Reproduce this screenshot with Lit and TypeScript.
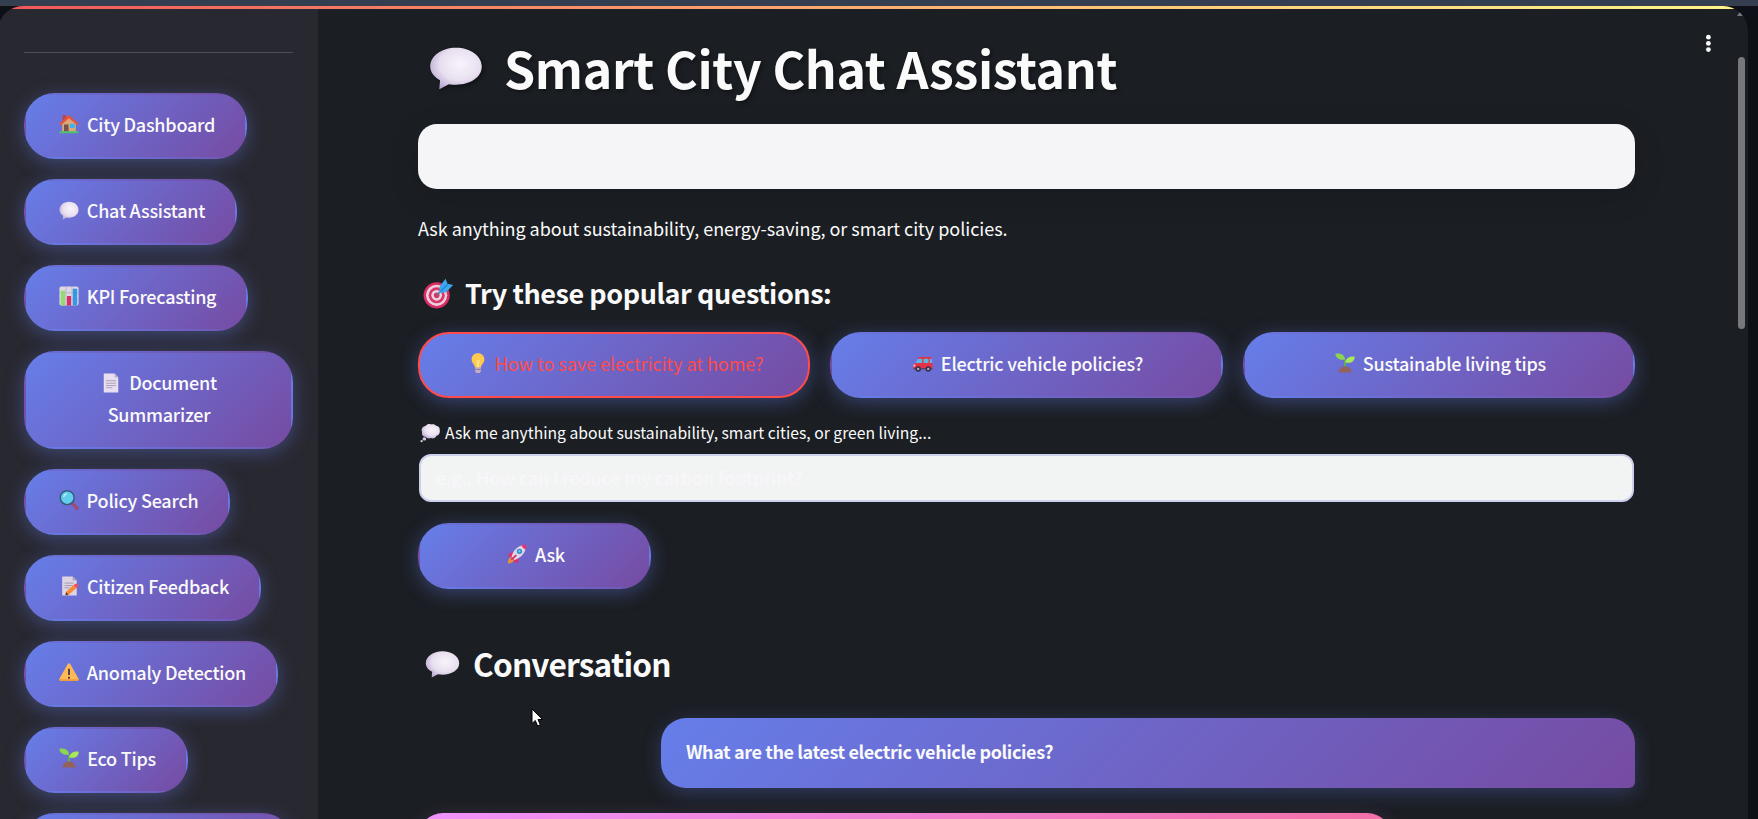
import { LitElement, html, css, svg } from 'lit';
import { customElement, property } from 'lit/decorators.js';

const icons: Record<string, unknown> = {
  house: svg`<path d="M4 1.500h4v7H4z" fill="#c0463c"/><path d="M3.500 10.500 11 4l7.500 6.500V19.500h-15z" fill="#dca678"/><path d="M.3 10.800 10.900 1.200 21.700 10.800l-1.500 1.700L11 4.600 1.900 12.500z" fill="#e8533a"/><path d="M5.500 11.500h5v8h-5z" fill="#77534b"/><path d="M12.300 10.800h5v4.600h-5z" fill="#35b6ee"/><path d="M.5 19h21v2.200H.5z" fill="#4bc56a"/>`,
  bubble: svg`<path d="M11 1.800c5.900 0 10.500 3.900 10.500 9s-4.600 8.700-10.500 8.700c-1 0-2-.1-2.900-.3L4.200 21.700l.3-4.400C2.100 15.900.5 13.500.5 10.800c0-5.100 4.600-9 10.500-9z" fill="url(#cloud)"/>`,
  chart: svg`<rect x=".5" y=".5" width="21" height="21" rx="2" fill="#ded8e4"/><path d="M1 7.500h20M1 14.500h20M7.700 1v20M14.300 1v20" stroke="#b4acbd" stroke-width=".8"/><path d="M2 5.200h4.700v16.300H2z" fill="#91dc6d"/><path d="M8.700 11h4.600v10.500H8.700z" fill="#d92d6a"/><path d="M15.200 3h4.800v18.500h-4.800z" fill="#329ae5"/>`,
  doc: svg`<path d="M3 .5h12l4 4.500v16.500H3z" fill="#e8def1"/><path d="M15 .5V5h4z" fill="#bcb1cb"/><path d="M5.500 8.500h11M5.500 11.200h11M5.500 13.800h11M5.500 16.200h7" stroke="#a69caf" stroke-width="1"/>`,
  search: svg`<path d="m15 15 4.800 5" stroke="#9b4c79" stroke-width="3.800" stroke-linecap="round"/><circle cx="9" cy="8.500" r="7.600" fill="#63cdee" stroke="#385b7c" stroke-width="1.600"/><path d="M5 7.500c.4-1.900 1.700-3 3.500-3.400" stroke="#b4effc" stroke-width="1.500" fill="none"/>`,
  memo: svg`<path d="M3.500.5h11.500l4.500 4.500v16.500h-16z" fill="#ded5e4"/><path d="M15 .5V5h4.500z" fill="#ada3b8"/><path d="M6 7.800h10M6 10.500h9M6 13h6" stroke="#9f96aa" stroke-width="1"/><path d="m7 21 .8-3.800 8-7 3.200 3.300-8 6.900z" fill="#fa8a33"/><path d="m15.800 10.200 1.800-1.300c1.700-1 4.600 1.200 3.400 2.900L19 13.500z" fill="#f34f62"/><path d="m7 21.300.8-3.600 2.900 3.100z" fill="#5a4045"/>`,
  warning: svg`<path d="M11 1.500c.6 0 1 .3 1.300.8l9.200 16.200c.6 1-.1 2-1.200 2H1.700c-1.100 0-1.800-1-1.200-2L9.700 2.300c.3-.5.7-.8 1.300-.8z" fill="#ffba55"/><path d="M.4 19h21.200c0 1.100-.5 1.800-1.300 1.800H1.700c-.8 0-1.300-.7-1.300-1.800z" fill="#f19d3f"/><path d="M11 7.500v6.700M11 16.300v2" stroke="#4c3549" stroke-width="2"/>`,
  seedling: svg`<path d="M11.100 16V8" stroke="#59b647" stroke-width="2"/><path d="M.4.700c4.500-.8 10.200.1 10.700 6.800C5.800 7.800.9 6.300.4.700z" fill="#8bd64d"/><path d="M21.700 4c-.1 4.900-4.400 8.100-10.600 6.200 1-4.800 5.500-6.900 10.600-6.200z" fill="#a9e957"/><path d="M4 21.500c0-4 3-6.700 7-6.700s7 2.700 7 6.700z" fill="#94615b"/>`,
  target: svg`<circle cx="9.700" cy="12.300" r="9.300" fill="#d92d64"/><circle cx="9.700" cy="12.300" r="7.500" fill="#eccfdf"/><circle cx="9.700" cy="12.300" r="5.700" fill="#d83568"/><circle cx="9.700" cy="12.300" r="3.800" fill="#ecd5e2"/><circle cx="9.700" cy="12.300" r="2" fill="#d83568"/><path d="m9.700 12.300 6-6" stroke="#68758f" stroke-width="1.200"/><path d="m11.500 10.800.3-4.700L16 .5l1.400 3.600 4 .8-5 5.300z" fill="#3ba7ed"/><path d="m12.500 9.500 5-5" stroke="#1f7fc8" stroke-width=".8"/>`,
  bulb: svg`<path d="M11 .3c4.200 0 7 3 7 6.800 0 4.300-3.500 5-3.700 9.200H7.700C7.500 12.100 4 11.400 4 7.100 4 3.300 6.800.3 11 .3z" fill="#ffc94d"/><path d="M8.500 7c1 1.500 4 1.500 5 0-1 2-1.300 4-1.300 9H9.800c0-5-.3-7-1.300-9z" fill="#ffe589"/><path d="M7.700 16h6.600v3.800L13 22H9l-1.300-2.200z" fill="#c2adc1"/><path d="M7.700 18h6.600" stroke="#89758f"/>`,
  car: svg`<path d="m2.500 11 3.500-5.500h14l1.200 5.500z" fill="#62b5e2"/><path d="M6 4.500h14.200v1.700H5zM10 6h1.500v5H10zM17 6h1.500v5H17z" fill="#e33343"/><path d="M.5 12.500 4 11h17.500v6.500H.5z" fill="#e5314a"/><path d="M.5 16.500h21v1.500H.5z" fill="#66425e"/><circle cx="5.700" cy="17.500" r="3" fill="#362f4c"/><circle cx="16.800" cy="17.500" r="3" fill="#362f4c"/><circle cx="5.700" cy="17.500" r="1.300" fill="#b4aac3"/><circle cx="16.800" cy="17.500" r="1.300" fill="#b4aac3"/><path d="M.5 13.800h2" stroke="#ffd4b4" stroke-width="2"/>`,
  thought: svg`<path d="M6.500 2c1-2 4-2.600 5.700-1.400 2-1 4.800-.1 5.600 1.600 2.400.2 4.200 2.200 3.800 4.300 1 4.200-.9 7.700-3.500 8-1 3.200-4 3.800-6 2.700-2 1-5 .4-5.900-1.500-2.700.1-4.700-2.400-3.900-6.300C.5 5.800 3.500 2.300 6.500 2z" fill="url(#cloud)"/><circle cx="4.800" cy="18.200" r="2" fill="#d5c7e5"/><circle cx="1.800" cy="21" r="1.300" fill="#d5c7e5"/>`,
  rocket: svg`<path d="m7.500 9-4.300.8L.8 14.300l5-.5zM12.800 15l-.8 6.300-3.800-1.500-.4-3.800z" fill="#e62b66"/><path d="M5 14.500c-3 .3-4 3-4 6.800 3.500.2 6.800-1.500 6.600-4.800z" fill="#ee8c3a"/><path d="M5 14C7 6.500 12.500 1.500 19 1.100c2.200-.2 2.300.5 2 2.400C20.200 9.500 15.500 15 8.500 17.500z" fill="#dfd6e7"/><path d="M15.500 1.900c2.300-.9 4.800-1.200 5.600-.8.5.6.2 3.300-.7 5.600z" fill="#e4356b"/><circle cx="13.700" cy="8" r="2.900" fill="#278bcd"/><circle cx="13.700" cy="8" r="1.300" fill="#76c7ed"/><path d="m4.800 17.200 5.500-5" stroke="#d72d66" stroke-width="2"/>`,
};

@customElement('emoji-icon')
export class EmojiIcon extends LitElement {
  static styles = css`
    :host { display: inline-block; width: 20px; height: 20px; flex: none; }
    .art { display: block; width: 100%; height: 100%; overflow: visible; }
  `;
  @property() name = '';
  render() {
    return html`<svg class="art" viewBox="0 0 22 22" preserveAspectRatio="none">
      <defs><radialGradient id="cloud" cx=".58" cy=".4" r=".65"><stop offset="0" stop-color="#f8f4fc"/><stop offset=".6" stop-color="#e8dfef"/><stop offset="1" stop-color="#baa9d2"/></radialGradient></defs>
      ${icons[this.name]}</svg>`;
  }
}

const nav = [
  { icon: 'house', label: 'City Dashboard', w: 223 },
  { icon: 'bubble', label: 'Chat Assistant', w: 213 },
  { icon: 'chart', label: 'KPI Forecasting', w: 224 },
  { icon: 'doc', label: 'Document Summarizer', w: 269 },
  { icon: 'search', label: 'Policy Search', w: 206 },
  { icon: 'memo', label: 'Citizen Feedback', w: 237 },
  { icon: 'warning', label: 'Anomaly Detection', w: 254 },
  { icon: 'seedling', label: 'Eco Tips', w: 164 },
];
const questions = [
  { icon: 'bulb', label: 'How to save electricity at home?', active: true },
  { icon: 'car', label: 'Electric vehicle policies?', active: false },
  { icon: 'seedling', label: 'Sustainable living tips', active: false },
];

@customElement('app-root')
export class AppRoot extends LitElement {
  static styles = css`
    :host { display: block; position: relative; height: 819px; overflow: hidden; background: #0d1117; color: #fafafa;
      font: 500 18px/32px "Noto Sans CJK SC", "Noto Sans", sans-serif; }
    * { box-sizing: border-box; }
    .strip { height: 6px; background: linear-gradient(#343e51 0 5px, #3c3d48 5px); }
    .panel { display: flex; height: 813px; width: 1750px; margin-left: -2px; border-radius: 25px 25px 0 0; overflow: hidden; background: #1b1e23; position: relative; }
    .rainbow { position: absolute; top: 0; left: 0; right: 0; height: 3px; background: linear-gradient(90deg, #f0575a, #feca7a 66%, #fff58c); }
    .side { width: 320px; height: 813px; padding: 46px 25px 0 26px; background: #282830; flex: none; overflow: hidden; }
    .rule { height: 1px; background: #4d4d55; margin-bottom: 40px; }
    .menu { display: flex; flex-direction: column; align-items: flex-start; gap: 20px; }
    .btn { display: flex; align-items: center; justify-content: center; gap: 8px; height: 66px; border: 2px solid transparent; border-radius: 31px;
      padding: 0 0 4px 3px; margin: 0; color: #fafafa; font: inherit; letter-spacing: -.24px; white-space: nowrap; flex: none;
      background: linear-gradient(135deg, #667eea 0%, #764ba2 100%); box-shadow: 0 4px 19px rgba(102,126,234,.4); }
    .tall { height: 98px; white-space: normal; display: block; padding: 13px 30px 17px 31px; text-align: center; }
    .tall emoji-icon { vertical-align: -3px; margin-right: 8px; }
    .active { border-color: #ff4b4b; color: #ff4b4b; font-weight: 400; letter-spacing: -.05px; gap: 7px; }
    .main { flex: 1; padding: 0 113px 0 100px; height: 813px; overflow: hidden; }
    h1, h2, h3, p { margin: 0; }
    h1 { display: flex; align-items: center; gap: 21px; height: 118px; padding: 4px 0 0 11px; font-size: 50px; font-weight: 700; line-height: 60px; letter-spacing: -.35px; text-shadow: 2px 2px 4px rgba(0,0,0,.4); }
    h1 emoji-icon { width: 54px; height: 46px; filter: drop-shadow(2px 2px 2px rgba(0,0,0,.4)); }
    .card { height: 65px; border-radius: 19px; background: #f5f5f7; box-shadow: 0 8px 32px rgba(0,0,0,.12); }
    .lead { margin-top: 23px; font-weight: 400; letter-spacing: -.04px; }
    h3 { display: flex; align-items: center; gap: 11px; margin-top: 29px; height: 40px; padding-left: 5px; font-size: 27px; font-weight: 700; letter-spacing: -.45px; }
    h3 emoji-icon { width: 31px; height: 31px; }
    .row { display: grid; grid-template-columns: repeat(3, 1fr); gap: 20px; margin-top: 19px; }
    .label { display: flex; align-items: center; gap: 5px; height: 30px; margin: 20px 0 6px; padding-left: 2px; font-size: 15.700px; font-weight: 400; }
    .label emoji-icon { width: 20px; height: 18px; }
    .field { height: 48px; margin: 0 1px; border: 2px solid #ccd0ec; border-radius: 12px; background: #f2f4f4; color: #f8f6fa; padding: 0 15px; line-height: 42px; letter-spacing: -.13px; }
    .ask { width: 233px; margin-top: 21px; }
    h2 { display: flex; align-items: center; gap: 13px; height: 44px; margin-top: 52px; padding-left: 7px; font-size: 31.600px; font-weight: 700; letter-spacing: -.8px; }
    h2 emoji-icon { width: 35px; height: 29px; }
    .user { height: 70px; width: 974px; margin: 33px 0 0 auto; padding: 17px 25px; border-radius: 25px 25px 6px 25px; font-weight: 700; letter-spacing: -.39px;
      background: linear-gradient(135deg, #667eea, #764ba2); box-shadow: 0 5px 19px rgba(102,126,234,.3); }
    .bot { height: 700px; width: 974px; margin-top: 25px; border-radius: 25px 25px 25px 6px; background: linear-gradient(135deg, #f093fb, #f5576c); box-shadow: 0 5px 19px rgba(240,147,251,.2); }
    .chrome { position: absolute; overflow: visible; right: 0; top: 0; }
    .cursor { position: absolute; left: 531px; top: 708px; }
  `;
  render() {
    return html`
      <div class="strip"></div>
      <div class="panel">
        <aside class="side"><div class="rule"></div>
          <nav class="menu">
            ${nav.map(n => html`<button class="btn ${n.icon === 'doc' ? 'tall' : ''}" style="width:${n.w}px"><emoji-icon name=${n.icon}></emoji-icon><span>${n.label}</span></button>`)}
            <button class="btn" style="width:269px"></button>
          </nav>
        </aside>
        <main class="main">
          <h1><emoji-icon name="bubble"></emoji-icon><span>Smart City Chat Assistant</span></h1>
          <div class="card"></div>
          <p class="lead"><span>Ask anything about sustainability, energy-saving, or smart city policies.</span></p>
          <h3><emoji-icon name="target"></emoji-icon><span>Try these popular questions:</span></h3>
          <div class="row">${questions.map(q => html`<button class="btn ${q.active ? 'active' : ''}"><emoji-icon name=${q.icon}></emoji-icon><span>${q.label}</span></button>`)}</div>
          <div class="label"><emoji-icon name="thought"></emoji-icon><span>Ask me anything about sustainability, smart cities, or green living...</span></div>
          <div class="field"><span>e.g., How can I reduce my carbon footprint?</span></div>
          <button class="btn ask"><emoji-icon name="rocket"></emoji-icon><span>Ask</span></button>
          <h2><emoji-icon name="bubble"></emoji-icon><span>Conversation</span></h2>
          <div class="user"><span>What are the latest electric vehicle policies?</span></div>
          <div class="bot"></div>
        </main>
        <div class="rainbow"></div>
        <svg class="chrome" width="50" height="340" viewBox="1698 6 50 340">
          <g fill="#fafafa"><circle cx="1708.400" cy="37.200" r="2.400"/><circle cx="1708.400" cy="43.400" r="2.400"/><circle cx="1708.400" cy="49.600" r="2.400"/></g>
          <path d="m1737 16 3-4.500 3 4.500z" fill="#77787b"/><rect x="1738" y="57" width="7" height="272" rx="3.500" fill="#77787b"/>
        </svg>
      </div>
      <svg class="cursor" width="14" height="20" viewBox="0 0 14 20"><path d="M1 1v14.500l3.300-3 2.300 5.500 2.700-1.200-2.300-5.300h4.600z" fill="#fff" stroke="#000" stroke-width="1"/></svg>
    `;
  }
}
